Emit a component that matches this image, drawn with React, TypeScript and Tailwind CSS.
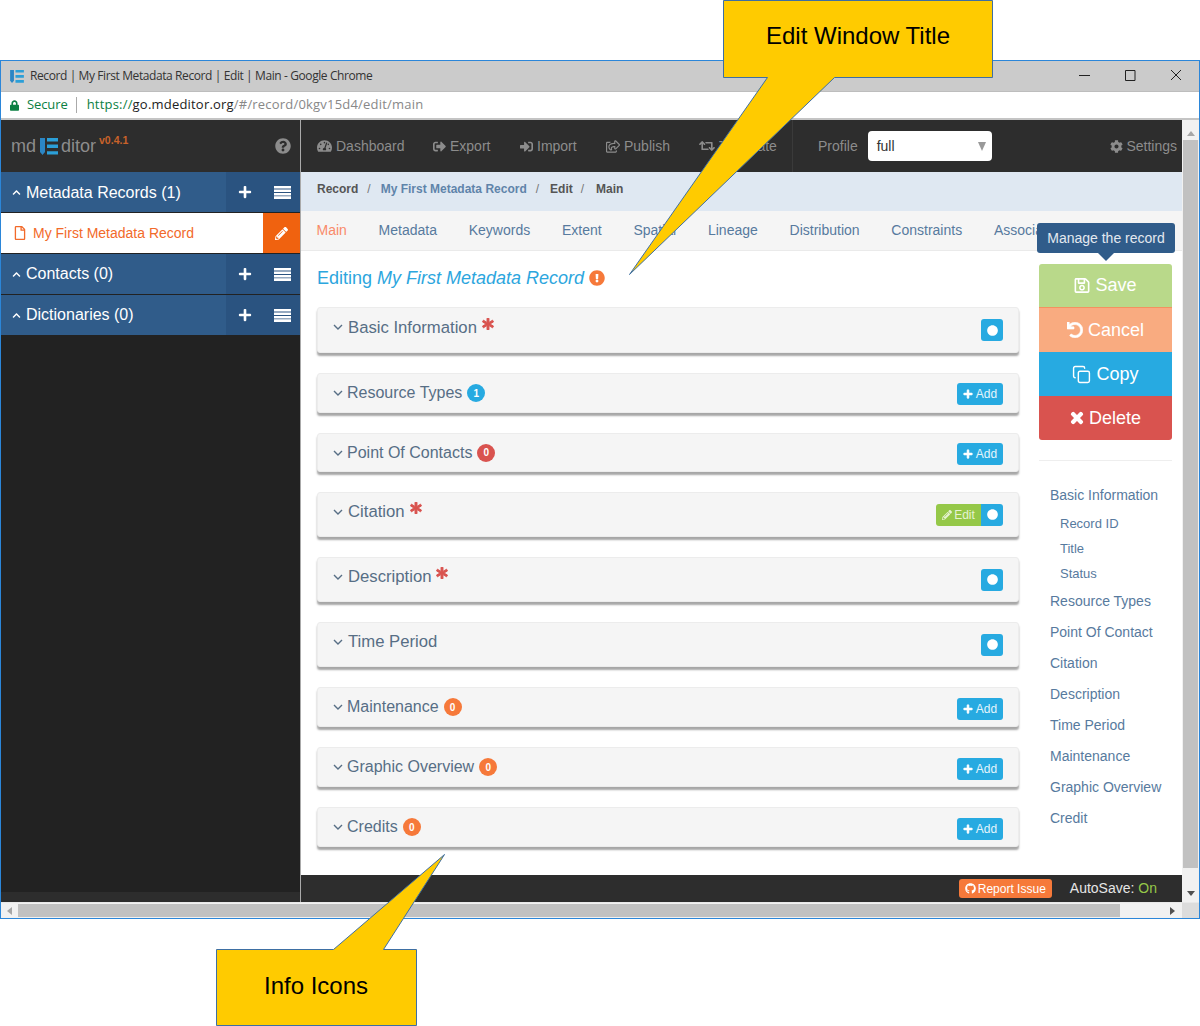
import { ReactNode } from 'react';
import { Copy } from 'lucide-react';
import {
  FaAsterisk,
  FaChevronUp,
  FaCircle,
  FaCog,
  FaExclamationCircle,
  FaGithub,
  FaLock,
  FaPencilAlt,
  FaPlus,
  FaQuestionCircle,
  FaRegFile,
  FaRegSave,
  FaRegShareSquare,
  FaRetweet,
  FaSignInAlt,
  FaSignOutAlt,
  FaTachometerAlt,
  FaTimes,
  FaUndo,
} from 'react-icons/fa';

const Logo = ({ className }: { className: string }) => (
  <svg viewBox="0 0 18 17" className={className}>
    <path d="M0 0h5v14l-2.500 3L0 14z" fill="#2b86c5" />
    <path d="M7 0h11v3.400H7zM7 6.600h11V10H7zM7 13.200h11v3.400H7z" fill="#2b9fd8" />
  </svg>
);

const SidebarSection = ({ title, className }: { title: string; className?: string }) => (
  <div className="flex h-10 bg-[#305c8a] text-white">
    <div className={`flex flex-1 items-center pl-[11px] text-[16px] ${className ?? ''}`}>
      <FaChevronUp className="mr-[5px] h-[9px] w-[9px]" />
      {title}
    </div>
    <div className="flex w-[74px] items-center justify-between bg-[#2a5380] pl-[12px] pr-[9px]">
      <FaPlus className="h-[14px] w-[14px]" />
      <svg viewBox="0 0 17 13" className="h-[13px] w-[17px]" fill="#fff">
        <path d="M0 0h17v2.600H0zM0 3.400h17V6H0zM0 6.900h17v2.600H0zM0 10.300h17V13H0z" />
      </svg>
    </div>
  </div>
);

const NavItem = ({ icon, label, className }: { icon: ReactNode; label: string; className: string }) => (
  <div className={`flex items-center gap-1 ${className}`}>
    {icon}
    {label}
  </div>
);

type Panel = {
  title: string;
  height: string;
  required?: boolean;
  badge?: { value: number; color: string };
  add?: string;
  edit?: boolean;
  dot?: boolean;
};

const panels: Panel[] = [
  { title: 'Basic Information', height: 'h-[46px]', required: true, dot: true },
  { title: 'Resource Types', height: 'h-[40px]', badge: { value: 1, color: 'bg-[#27aae1]' }, add: 'mt-[2px]' },
  { title: 'Point Of Contacts', height: 'h-[39px]', badge: { value: 0, color: 'bg-[#d9534f]' }, add: 'mt-[2px]' },
  { title: 'Citation', height: 'h-[45px]', required: true, edit: true, dot: true },
  { title: 'Description', height: 'h-[45px]', required: true, dot: true },
  { title: 'Time Period', height: 'h-[45px]', dot: true },
  { title: 'Maintenance', height: 'h-[40px]', badge: { value: 0, color: 'bg-[#f6793a]' }, add: 'mt-[4px]' },
  { title: 'Graphic Overview', height: 'h-[40px]', badge: { value: 0, color: 'bg-[#f6793a]' }, add: 'mt-[4px]' },
  { title: 'Credits', height: 'h-[40px]', badge: { value: 0, color: 'bg-[#f6793a]' }, add: 'mt-[4px]' },
];

const Chevron = ({ className }: { className: string }) => (
  <svg viewBox="0 0 10 6" className={`h-[6px] w-[10px] ${className}`} fill="none" stroke="#576e85" strokeWidth="1.4">
    <path d="M1 1l4 4 4-4" />
  </svg>
);

const PanelRow = ({ panel }: { panel: Panel }) => (
  <div
    className={`flex items-center justify-between rounded-[3px] border border-[#ececec] bg-[#f5f5f5] pl-[15px] pr-[15px] shadow-[0_3px_2px_rgba(0,0,0,0.35)] ${panel.height}`}
  >
    <div className={`flex items-center text-[#576e85] ${panel.dot ? 'pb-[5px] text-[16.7px]' : 'text-[16px]'}`}>
      <Chevron className={panel.dot ? 'mr-[5px]' : 'mr-[4px]'} />
      <span>{panel.title}</span>
      {panel.required && (
        <FaAsterisk stroke="currentColor" strokeWidth={40} className="mb-[7px] ml-[5px] h-[12px] w-[12px] text-[#d9534f]" />
      )}
      {panel.badge && (
        <span
          className={`ml-[5px] flex h-[18px] w-[18px] items-center justify-center rounded-full text-[10px] font-bold text-white ${panel.badge.color}`}
        >
          {panel.badge.value}
        </span>
      )}
    </div>
    <div className="flex">
      {panel.edit && (
        <div className="flex h-[22px] w-[45px] items-center justify-center gap-[2px] rounded-l-[3px] bg-[#95c848] text-[12px] text-[#e6f2d2]">
          <FaPencilAlt className="h-[10px] w-[10px]" />
          Edit
        </div>
      )}
      {panel.dot && (
        <div
          className={`flex h-[22px] w-[22px] items-center justify-center bg-[#27aae1] ${panel.edit ? 'rounded-r-[3px]' : 'rounded-[3px]'}`}
        >
          <FaCircle className="h-[11px] w-[11px] text-white" />
        </div>
      )}
      {panel.add && (
        <div
          className={`flex h-[22px] w-[46px] items-center justify-center gap-[3px] rounded-[3px] bg-[#27aae1] text-[12px] text-[#e4f5fc] ${panel.add}`}
        >
          <FaPlus stroke="currentColor" strokeWidth={30} className="h-[10px] w-[10px] text-white" />
          Add
        </div>
      )}
    </div>
  </div>
);

const outline = [
  { label: 'Basic Information', className: 'mb-[13px]' },
  { label: 'Record ID', className: 'ml-[10px] mb-[9px] text-[13px]' },
  { label: 'Title', className: 'ml-[10px] mb-[9px] text-[13px]' },
  { label: 'Status', className: 'ml-[10px] mb-[11px] text-[13px]' },
  { label: 'Resource Types', className: 'mb-[15px]' },
  { label: 'Point Of Contact', className: 'mb-[15px]' },
  { label: 'Citation', className: 'mb-[15px]' },
  { label: 'Description', className: 'mb-[15px]' },
  { label: 'Time Period', className: 'mb-[15px]' },
  { label: 'Maintenance', className: 'mb-[15px]' },
  { label: 'Graphic Overview', className: 'mb-[15px]' },
  { label: 'Credit', className: '' },
];

const ActionButton = ({ className, children }: { className: string; children: ReactNode }) => (
  <div className={`flex h-[44px] items-center justify-center gap-[5px] text-[18px] text-white ${className}`}>{children}</div>
);

export default function App() {
  return (
    <div className="relative h-[1026px] w-[1200px] overflow-hidden bg-white pt-[60px] font-['Liberation_Sans',sans-serif]">
      {/* Browser window */}
      <div className="flex h-[859px] w-[1200px] flex-col border border-[#2b86d9]">
        <div className="flex h-[30px] items-center justify-between bg-[#cbcbcb] pl-[9px] font-['Open_Sans',sans-serif] text-[12px] text-[#333]">
          <div className="flex items-center gap-[6px]">
            <Logo className="h-[13px] w-[14px]" />
            <span className="tracking-[-0.4px]">Record | My First Metadata Record | Edit | Main - Google Chrome</span>
          </div>
          <svg viewBox="0 0 138 30" className="h-[30px] w-[138px]" fill="none" stroke="#222" strokeWidth="1">
            <path d="M18 14.500h11M64.500 9.500h9.500v10h-9.500zM110 9l10 10M120 9l-10 10" />
          </svg>
        </div>
        <div className="flex h-[29px] items-center border-b-2 border-b-[#c4c4c4] border-t border-t-[#bdbdbd] bg-white pl-[9px] font-['Open_Sans',sans-serif] text-[13px]">
          <FaLock className="h-[11px] w-[9px] text-[#0b8043]" />
          <span className="ml-[8px] tracking-[-0.1px] text-[#0b8043]">Secure</span>
          <span className="ml-[8px] mr-[10px] h-[16px] w-px bg-[#aaa]" />
          <span className="tracking-[0.2px] text-[#0b8043]">https://</span>
          <span className="tracking-[0.2px] text-[#222]">go.mdeditor.org</span>
          <span className="tracking-[0.2px] text-[#888]">/#/record/0kgv15d4/edit/main</span>
        </div>

        <div className="flex min-h-0 flex-1">
          {/* App */}
          <div className="flex min-w-0 flex-1">
            <aside className="flex w-[300px] flex-col border-r border-r-[#aaa] bg-[#222]">
              <div className="flex h-[52px] items-center justify-between bg-[#2d2d2d] pl-[10px] pr-[9px] text-[18px] text-[#8c8c8c]">
                <div className="flex items-center">
                  md
                  <Logo className="ml-[4px] mr-[3px] h-[17px] w-[18px]" />
                  ditor
                  <span className="mb-[10px] ml-[3px] text-[10.5px] font-bold text-[#c9622a]">v0.4.1</span>
                </div>
                <FaQuestionCircle className="h-[16px] w-[16px]" />
              </div>
              <SidebarSection title="Metadata Records (1)" className="pt-[1px]" />
              <div className="mt-px flex h-[40px] bg-white">
                <div className="flex flex-1 items-center pl-[13px] text-[14px] text-[#f26a2a]">
                  <FaRegFile className="mr-[7px] h-[14px] w-[12px]" />
                  My First Metadata Record
                </div>
                <div className="flex w-[37px] items-center justify-center bg-[#f0620f]">
                  <FaPencilAlt className="h-[13px] w-[13px] text-white" />
                </div>
              </div>
              <div className="mt-px">
                <SidebarSection title="Contacts (0)" />
              </div>
              <div className="mt-px">
                <SidebarSection title="Dictionaries (0)" />
              </div>
              <div className="mt-auto h-[10px] bg-[#2d2d2d]" />
            </aside>

            <main className="flex min-w-0 flex-1 flex-col bg-white">
              <div className="flex h-[52px] items-center bg-[#2d2d2d] pl-[16px] pr-[5px] text-[14px] text-[#8c8c8c]">
                <NavItem className="w-[116px]" icon={<FaTachometerAlt className="h-[14px] w-[15px]" />} label="Dashboard" />
                <NavItem className="w-[87px]" icon={<FaSignOutAlt className="h-[13px] w-[13px]" />} label="Export" />
                <NavItem className="w-[86px]" icon={<FaSignInAlt className="h-[13px] w-[13px]" />} label="Import" />
                <NavItem className="w-[93px]" icon={<FaRegShareSquare className="h-[13px] w-[14px]" />} label="Publish" />
                <NavItem className="w-[93px]" icon={<FaRetweet className="h-[14px] w-[16px]" />} label="Translate" />
                <span className="h-full w-px bg-[#3a3a3a]" />
                <span className="ml-[25px]">Profile</span>
                <div className="ml-[10px] flex h-[30px] w-[124px] items-center justify-between rounded-[4px] bg-white pl-[9px] pr-[6px] text-[#333]">
                  full
                  <svg viewBox="0 0 8 9" className="h-[9px] w-[8px]" fill="#999">
                    <path d="M0 0h8L4 9z" />
                  </svg>
                </div>
                <div className="ml-auto flex items-center gap-[3px]">
                  <FaCog className="h-[13px] w-[13px]" />
                  Settings
                </div>
              </div>

              <div className="flex h-[39px] items-center bg-[#dfe8f2] pb-[5px] pl-[16px] text-[12px] font-bold text-[#555]">
                Record
                <span className="ml-[9px] mr-[10px] font-normal text-[#777]">/</span>
                <span className="text-[#5f84aa]">My First Metadata Record</span>
                <span className="ml-[9px] mr-[11px] font-normal text-[#777]">/</span>
                Edit
                <span className="ml-[8px] mr-[5px] font-normal text-[#777]">/</span>
                <span className="ml-[7px]">Main</span>
              </div>

              <div className="flex h-[40px] items-center gap-[31.75px] overflow-hidden whitespace-nowrap border-b border-b-[#eaeaea] bg-[#f5f5f5] pl-[15.5px] text-[14px] text-[#577a9e]">
                <span className="text-[#f98a6a]">Main</span>
                <span>Metadata</span>
                <span>Keywords</span>
                <span>Extent</span>
                <span>Spatial</span>
                <span>Lineage</span>
                <span>Distribution</span>
                <span>Constraints</span>
                <span>Associated</span>
              </div>

              <div className="flex min-h-0 flex-1 gap-5 pl-[16px]">
                <div className="w-[702px]">
                  <h1 className="mb-[18px] mt-[16px] flex items-center text-[18px] leading-[22px] text-[#2ca6de]">
                    Editing&nbsp;<em>My First Metadata Record</em>
                    <FaExclamationCircle className="ml-[5px] h-[16px] w-[16px] text-[#f6793a]" />
                  </h1>
                  <div className="flex flex-col gap-5">
                    {panels.map((panel) => (
                      <PanelRow key={panel.title} panel={panel} />
                    ))}
                  </div>
                </div>

                <div className="relative w-[133px] pt-[13px]">
                  <div className="absolute left-[-2px] top-[-28px] flex h-[30px] w-[138px] items-center justify-center rounded-[3px] bg-[#305c8a] text-[14px] text-[#e3e9f0]">
                    Manage the record
                    <span className="absolute bottom-[-8px] left-1/2 ml-[-8px] h-0 w-0 border-x-8 border-t-8 border-x-transparent border-t-[#305c8a]" />
                  </div>
                  <div className="overflow-hidden rounded-[3px]">
                    <ActionButton className="border-b border-b-[#f3925f] bg-[#b9d98a]">
                      <FaRegSave className="h-[17px] w-[16px]" /> Save
                    </ActionButton>
                    <ActionButton className="bg-[#f9ab80]">
                      <FaUndo stroke="currentColor" strokeWidth={20} className="h-[16px] w-[16px]" /> Cancel
                    </ActionButton>
                    <ActionButton className="bg-[#27aae1]">
                      <Copy className="h-[19px] w-[19px]" strokeWidth={1.8} /> Copy
                    </ActionButton>
                    <ActionButton className="bg-[#d9534f]">
                      <FaTimes stroke="currentColor" strokeWidth={40} className="h-[16px] w-[14px]" /> Delete
                    </ActionButton>
                  </div>
                  <nav className="mt-[20px] flex flex-col border-t border-t-[#eee] pl-[11px] pt-[26px] text-[14px] leading-[16px] text-[#577a9e]">
                    {outline.map((item) => (
                      <span key={item.label} className={item.className}>
                        {item.label}
                      </span>
                    ))}
                  </nav>
                </div>
              </div>

              <div className="flex h-[27px] items-center justify-end bg-[#2d2d2d] pr-[25px] text-[14px] text-[#e6e6e6]">
                <div className="flex h-[19px] items-center gap-[2px] rounded-[3px] bg-[#f6793a] px-[6px] text-[12px] text-white">
                  <FaGithub className="h-[11px] w-[11px] text-white" />
                  Report Issue
                </div>
                <span className="ml-[18px]">
                  AutoSave: <span className="text-[#95c848]">On</span>
                </span>
              </div>
            </main>
          </div>

          {/* Page vertical scrollbar */}
          <div className="flex w-[17px] flex-col items-center bg-[#f1f1f1]">
            <svg viewBox="0 0 8 5" className="mt-[11px] h-[5px] w-[8px]" fill="#a6a6a6">
              <path d="M4 0l4 5H0z" />
            </svg>
            <div className="mt-[4px] h-[728px] w-[15px] bg-[#c1c1c1]" />
            <svg viewBox="0 0 8 5" className="mt-auto mb-[6px] h-[5px] w-[8px]" fill="#505050">
              <path d="M0 0h8L4 5z" />
            </svg>
          </div>
        </div>

        {/* Page horizontal scrollbar */}
        <div className="flex h-[16px] items-center border-t border-t-[#e8e8e8] bg-[#f1f1f1]">
          <svg viewBox="0 0 5 8" className="ml-[6px] h-[8px] w-[5px]" fill="#a6a6a6">
            <path d="M5 0v8L0 4z" />
          </svg>
          <div className="ml-[6px] h-[13px] w-[1102px] bg-[#c1c1c1]" />
          <svg viewBox="0 0 5 8" className="ml-[50px] h-[8px] w-[5px]" fill="#505050">
            <path d="M0 0v8l5-4z" />
          </svg>
          <div className="ml-auto h-full w-[17px] bg-[#dcdcdc]" />
        </div>
      </div>

      {/* Callouts drawn over the screenshot */}
      <svg viewBox="0 0 1200 1026" className="pointer-events-none absolute inset-0 h-[1026px] w-[1200px]">
        <path
          d="M723.500 0.500H992.500V77.500H834.500L629.500 274.500L767.500 77.500H723.500Z"
          fill="#ffcb00"
          stroke="#3e6fa3"
          strokeWidth="1"
        />
        <path
          d="M216.500 949.500H333.500L444.500 854.500L383.500 949.500H416.500V1025.500H216.500Z"
          fill="#ffcb00"
          stroke="#3e6fa3"
          strokeWidth="1"
        />
      </svg>
      <span className="absolute left-[723px] top-[22px] flex w-[270px] justify-center text-[24px] leading-[28px] text-black">
        Edit Window Title
      </span>
      <span className="absolute left-[216px] top-[972px] flex w-[200px] justify-center text-[24px] leading-[28px] text-black">
        Info Icons
      </span>
    </div>
  );
}
